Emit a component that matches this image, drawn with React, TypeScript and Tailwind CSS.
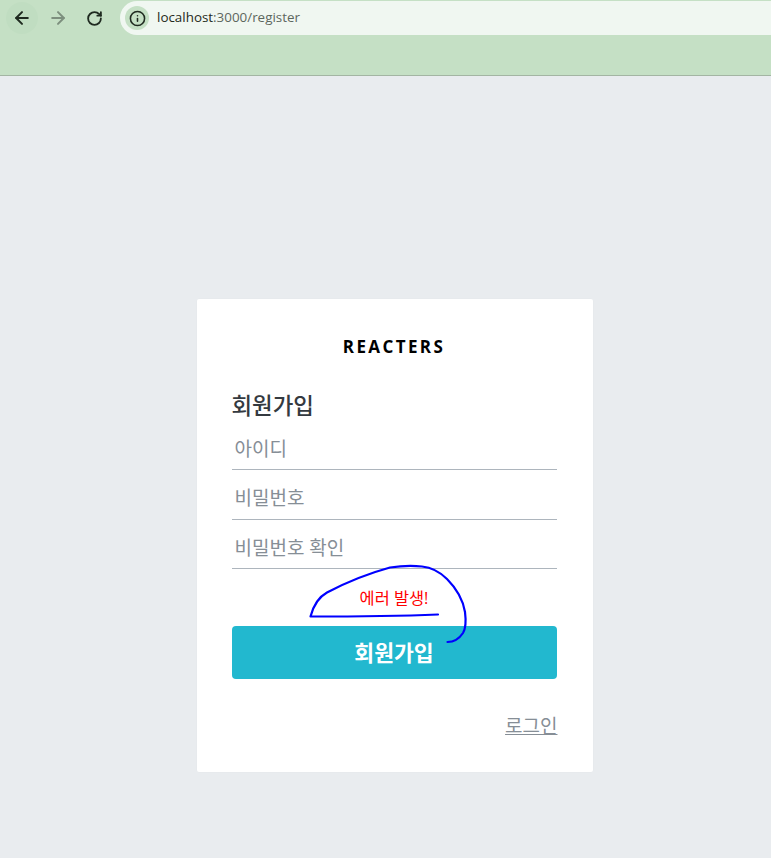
import { ArrowLeft, ArrowRight, RotateCw, Info } from "lucide-react";

const kr = "font-['Open_Sans','Noto_Sans_CJK_KR',sans-serif]";

function Field({ label, first, last }: { label: string; first?: boolean; last?: boolean }) {
  return (
    <div className={`${last ? "h-[49px]" : "h-[50px]"} ${first ? "pt-[10px]" : "pt-[8px]"} border-b border-[#adb5bd] flex items-center pl-[3px]`}>
      <span className="text-[19px] leading-none text-[#868e96] font-normal">{label}</span>
    </div>
  );
}

export default function App() {
  return (
    <div className={`relative w-[771px] h-[858px] overflow-hidden bg-[#e9ecef] flex flex-col ${kr}`}>
      <div className="h-[76px] shrink-0 bg-[#c5e0c5] border-b border-[#a3b5a3]">
        <div className="flex items-start h-9">
          <div className="ml-[6px] mt-[2px] w-8 h-8 rounded-full bg-[#c0ddc1] flex items-center justify-center text-[#1f2a20]">
            <ArrowLeft size={20} strokeWidth={2.4} />
          </div>
          <div className="ml-[4px] mt-[2px] w-8 h-8 flex items-center justify-center text-[#7d8f7e]">
            <ArrowRight size={20} strokeWidth={2.4} />
          </div>
          <div className="ml-[4px] mt-[2px] w-8 h-8 flex items-center justify-center text-[#1f2a20]">
            <RotateCw size={17} strokeWidth={2.6} />
          </div>
          <div className="ml-[10px] mt-[1px] flex-1 h-[34px] bg-[#f0f7f1] rounded-l-[17px] flex items-center pl-[5px]">
            <div className="w-6 h-6 rounded-full bg-[#c5e0c5] flex items-center justify-center text-[#1f2a20]">
              <Info size={17} strokeWidth={2.2} />
            </div>
            <span className="ml-[8px] text-[13.4px] leading-none text-[#1f2a20]">
              localhost<span className="text-[#5c665d]">:3000/register</span>
            </span>
          </div>
        </div>
      </div>

      <div className="flex-1 flex justify-center pt-[223px] pl-[18px]">
        <div className="w-[396px] h-[473px] bg-white rounded-[2px] pl-[35px] pr-[36px] pt-[35px] shadow-[0_0_2px_rgba(0,0,0,0.03)]">
          <div className="pt-[1px] text-center text-[17px] leading-6 font-bold tracking-[2.4px] text-black">REACTERS</div>
          <h3 className="mt-[33px] text-[22.4px] leading-[28px] font-medium text-[#343a40]">회원가입</h3>
          <div>
            <Field label="아이디" first />
            <Field label="비밀번호" />
            <Field label="비밀번호 확인" last />
          </div>
          <div className="mt-[18.5px] h-[20px] text-center text-[16.4px] leading-5 text-[#ff0000]">에러 발생!</div>
          <button className="mt-[18.5px] w-full h-[53px] pt-[2px] rounded-[4px] bg-[#22b8cf] text-white text-[21.6px] font-bold">회원가입</button>
          <div className="mt-[35px] -mr-[1px] text-right">
            <a className="text-[19px] leading-6 text-[#868e96] font-normal underline">로그인</a>
          </div>
        </div>
      </div>

      <svg className="absolute left-0 top-0 pointer-events-none" width="771" height="858" fill="none">
        <path
          d="M438 614.5 C400 616 350 616.5 310.5 616.5 C313 607 317 598 327 592.5 C345 583 370 573 390 567.5 C400 566 412 565.5 422 566.5 C432 567.5 440 572 447 579 C456 588 463 600 465 612 C466 620 466 628 463 633 C459 639 453 642 447.5 642"
          stroke="#0000ff"
          strokeWidth="2.2"
          strokeLinecap="round"
          strokeLinejoin="round"
        />
      </svg>
    </div>
  );
}
